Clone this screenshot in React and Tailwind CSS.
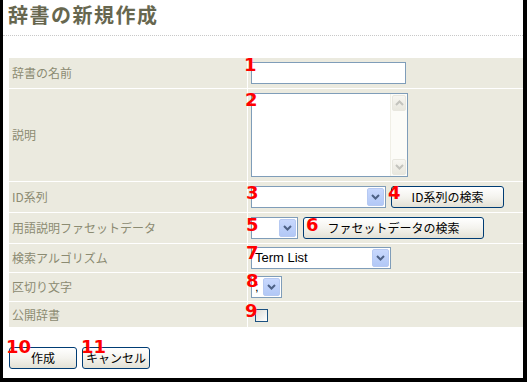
import React from 'react';

const jp = { fontFamily: '"Noto Sans CJK JP", "DejaVu Sans", sans-serif' };
const num = { fontFamily: '"DejaVu Sans", sans-serif' };

function Num({ n, className }) {
    return (
        <span
            style={num}
            className={`absolute z-10 text-[18px] font-bold leading-none text-[#ff0000] ${className}`}
        >
            {n}
        </span>
    );
}

function Arrow({ color = '#4d6185' }) {
    return (
        <svg width="9" height="6" viewBox="0 0 9 6">
            <path d="M1 1 L4.5 4.5 L8 1" fill="none" stroke={color} strokeWidth="2" />
        </svg>
    );
}

function Select({ width, text }) {
    return (
        <div
            className="flex h-[22px] items-center justify-between border border-[#7f9db9] bg-white pl-[3px] pr-px"
            style={{ width }}
        >
            <span style={{ fontFamily: '"Liberation Sans", Arial, sans-serif' }} className="text-[13px] text-black">
                {text}
            </span>
            <div className="flex h-[18px] w-[17px] items-center justify-center rounded-[2px] border border-[#b6c9f2] bg-gradient-to-b from-[#c8d8fd] to-[#b2c8f6]">
                <Arrow />
            </div>
        </div>
    );
}

function XpButton({ children, className }) {
    return (
        <button
            style={jp}
            className={`h-[22px] rounded-[3px] border border-[#003c74] bg-gradient-to-b from-white via-[#f4f3ee] to-[#e3e1d5] text-[12px] leading-none text-black ${className}`}
        >
            {children}
        </button>
    );
}

function Row({ label, h, children }) {
    return (
        <div className="grid grid-cols-[238px_1fr] gap-px" style={{ height: h }}>
            <div style={jp} className="flex items-center bg-[#ebeadf] pl-[3px] text-[12px] text-[#8b8b72]">
                {label}
            </div>
            <div className="relative flex items-center bg-[#ebeadf] pl-[3px]">{children}</div>
        </div>
    );
}

export default function App() {
    return (
        <div className="h-[382px] w-[527px] bg-black pb-[4px] pl-[3px] pr-[4px]">
            <div className="relative flex h-full flex-col bg-white">
                <div className="h-[36px] border-b border-dotted border-[#c8c8c8] pl-[5px] pt-[2px]">
                    <h1 style={jp} className="text-[20px] font-semibold leading-[26px] tracking-[1.5px] text-[#67674f]">
                        辞書の新規作成
                    </h1>
                </div>

                <div className="ml-[6px] mt-[22px] flex flex-col gap-px">
                    <Row label="辞書の名前" h={30}>
                        <Num n="1" className="left-[-4px] top-[-2px]" />
                        <div className="h-[22px] w-[155px] border border-[#7f9db9] bg-white" />
                    </Row>
                    <Row label="説明" h={92}>
                        <Num n="2" className="left-[-3px] top-[2px]" />
                        <div className="mt-[4px] flex h-[84px] w-[157px] self-start border border-[#7f9db9] bg-white">
                            <div className="flex-1" />
                            <div className="flex w-[17px] flex-col justify-between border-l border-[#f0efe6] bg-[#fcfcf8] p-px">
                                <div className="flex h-[16px] items-center justify-center rounded-[2px] border border-[#e8e7df] bg-gradient-to-b from-[#f7f6f1] to-[#e8e7de]">
                                    <div className="rotate-180"><Arrow color="#c3c3bd" /></div>
                                </div>
                                <div className="flex h-[16px] items-center justify-center rounded-[2px] border border-[#e8e7df] bg-gradient-to-b from-[#f7f6f1] to-[#e8e7de]">
                                    <Arrow color="#c3c3bd" />
                                </div>
                            </div>
                        </div>
                    </Row>
                    <Row label="ID系列" h={30}>
                        <Num n="3" className="left-[-2px] top-[2px]" />
                        <Select width={135} text="" />
                        <Num n="4" className="left-[140px] top-[2px]" />
                        <XpButton className="ml-[5px] w-[113px]">ID系列の検索</XpButton>
                    </Row>
                    <Row label="用語説明ファセットデータ" h={30}>
                        <Num n="5" className="left-[-2px] top-[3px]" />
                        <Select width={47} text="" />
                        <Num n="6" className="left-[58px] top-[3px]" />
                        <XpButton className="ml-[5px] w-[181px]">ファセットデータの検索</XpButton>
                    </Row>
                    <Row label="検索アルゴリズム" h={28}>
                        <Num n="7" className="left-[-2px] top-0" />
                        <Select width={140} text="Term List" />
                    </Row>
                    <Row label="区切り文字" h={28}>
                        <Num n="8" className="left-[-2px] top-[-1px]" />
                        <Select width={31} text=";" />
                    </Row>
                    <Row label="公開辞書" h={25}>
                        <Num n="9" className="left-[-3px] top-0" />
                        <div className="ml-[4px] mt-[2px] h-[13px] w-[13px] border border-[#1c5180] bg-gradient-to-br from-[#dcdcd7] to-white" />
                    </Row>
                </div>

                <div className="relative ml-[6px] mt-[20px] flex gap-[5px]">
                    <Num n="10" className="left-[-3px] top-[-9px]" />
                    <XpButton className="w-[68px]">作成</XpButton>
                    <Num n="11" className="left-[72px] top-[-9px]" />
                    <XpButton className="w-[68px]">キャンセル</XpButton>
                </div>
            </div>
        </div>
    );
}
